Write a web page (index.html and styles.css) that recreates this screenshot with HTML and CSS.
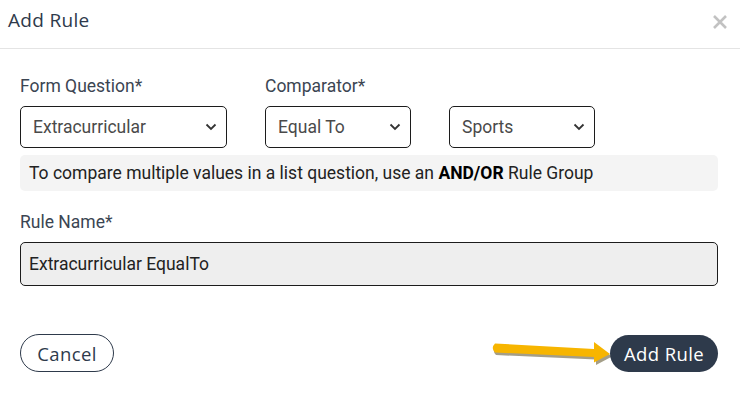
FILE: index.html
```html
<!DOCTYPE html>
<html lang="en">
<head>
    <meta charset="UTF-8">
    <meta name="viewport" content="width=device-width, initial-scale=1.0">
    <title>Add Rule</title>
    <link rel="stylesheet" href="styles.css">
</head>
<body>
    <div class="modal">
        <div class="modal-header">
            <h2>Add Rule</h2>
            <span class="close">
                <svg width="16" height="16" viewBox="0 0 16 16">
                    <path d="M2 2 L14 14 M14 2 L2 14" stroke="#c2c2c2" stroke-width="2.6" fill="none"/>
                </svg>
            </span>
        </div>

        <div class="modal-body">
            <div class="row">
                <div class="field field-question">
                    <label>Form Question*</label>
                    <div class="select">
                        <span>Extracurricular</span>
                        <svg class="chevron" width="12" height="8" viewBox="0 0 12 8"><path d="M1.5 1.5 L6 6 L10.5 1.5" stroke="#333" stroke-width="1.8" fill="none"/></svg>
                    </div>
                </div>
                <div class="field field-comparator">
                    <label>Comparator*</label>
                    <div class="select">
                        <span>Equal To</span>
                        <svg class="chevron" width="12" height="8" viewBox="0 0 12 8"><path d="M1.5 1.5 L6 6 L10.5 1.5" stroke="#333" stroke-width="1.8" fill="none"/></svg>
                    </div>
                </div>
                <div class="field field-value">
                    <label>&nbsp;</label>
                    <div class="select">
                        <span>Sports</span>
                        <svg class="chevron" width="12" height="8" viewBox="0 0 12 8"><path d="M1.5 1.5 L6 6 L10.5 1.5" stroke="#333" stroke-width="1.8" fill="none"/></svg>
                    </div>
                </div>
            </div>

            <div class="hint">To compare multiple values in a list question, use an <b>AND/OR</b> Rule Group</div>

            <div class="field">
                <label>Rule Name*</label>
                <div class="input">Extracurricular EqualTo</div>
            </div>
        </div>

        <div class="modal-footer">
            <button class="btn btn-cancel">Cancel</button>
            <div class="submit-wrap">
                <svg class="arrow" width="124" height="28" viewBox="0 0 124 28">
                    <path d="M6 7 L106 12.5 L106 6 L122 17.5 L106 26 L106 20.5 L6 16 Q1.5 11.5 6 7 Z" fill="#4a3d12" opacity="0.5"/>
                    <path d="M5 4.5 L104 10 L104 3 L120 15 L104 23.5 L104 18 L5 13.5 Q0.5 9 5 4.5 Z" fill="#f7b500"/>
                </svg>
                <button class="btn btn-primary">Add Rule</button>
            </div>
        </div>
    </div>
</body>
</html>
```

FILE: styles.css
```css
body {
    margin: 0;
    background-color: white;
    font-family: Roboto, "Liberation Sans", sans-serif;
}
.modal {
    width: 740px;
    height: 398px;
    background-color: white;
}
.modal-header {
    display: flex;
    justify-content: space-between;
    align-items: center;
    height: 48px;
    padding: 0 12px 0 8px;
    border-bottom: 1px solid #e4e4e4;
}
.modal-header h2 {
    margin: 0;
    padding-bottom: 8px;
    font-family: "Open Sans", sans-serif;
    font-weight: 400;
    font-size: 19px;
    letter-spacing: 0.3px;
    color: #2e3a4b;
}
.close {
    display: flex;
    padding-bottom: 5px;
}
.modal-body {
    padding: 28px 22px 0 20px;
}
.row {
    display: flex;
    gap: 38px;
}
.field label {
    display: block;
    font-size: 17.5px;
    color: #3b4552;
    line-height: 19px;
    margin-bottom: 10px;
}
.select {
    display: flex;
    justify-content: space-between;
    align-items: center;
    height: 40px;
    padding: 0 9px 0 12px;
    border: 1px solid #1c1c1c;
    border-radius: 5px;
    font-size: 17.5px;
    color: #4a4a4a;
}
.field-question .select {
    width: 184px;
}
.field-comparator .select {
    width: 123px;
}
.field-value .select {
    width: 123px;
}
.hint {
    margin: 7px 0 22px;
    height: 36px;
    line-height: 36px;
    padding-left: 9px;
    background-color: #f4f4f4;
    border-radius: 5px;
    font-size: 17.5px;
    color: #222;
}
.hint b {
    color: #000;
}
.input {
    height: 42px;
    line-height: 42px;
    padding-left: 8px;
    background-color: #eeeeee;
    border: 1px solid #1c1c1c;
    border-radius: 5px;
    font-size: 17.5px;
    color: #222;
}
.modal-footer {
    display: flex;
    justify-content: space-between;
    align-items: center;
    padding: 48px 22px 0 20px;
}
.submit-wrap {
    display: flex;
    align-items: center;
}
.arrow {
    margin-right: -4px;
}
.btn {
    height: 38px;
    border-radius: 20px;
    font-family: "Open Sans", sans-serif;
    font-size: 18.5px;
    letter-spacing: 0.4px;
    cursor: pointer;
}
.btn-cancel {
    width: 94px;
    background-color: white;
    border: 1px solid #2e3a4b;
    color: #2e3a4b;
}
.btn-primary {
    width: 108px;
    height: 37px;
    background-color: #2e3a4b;
    border: none;
    color: white;
}
```
